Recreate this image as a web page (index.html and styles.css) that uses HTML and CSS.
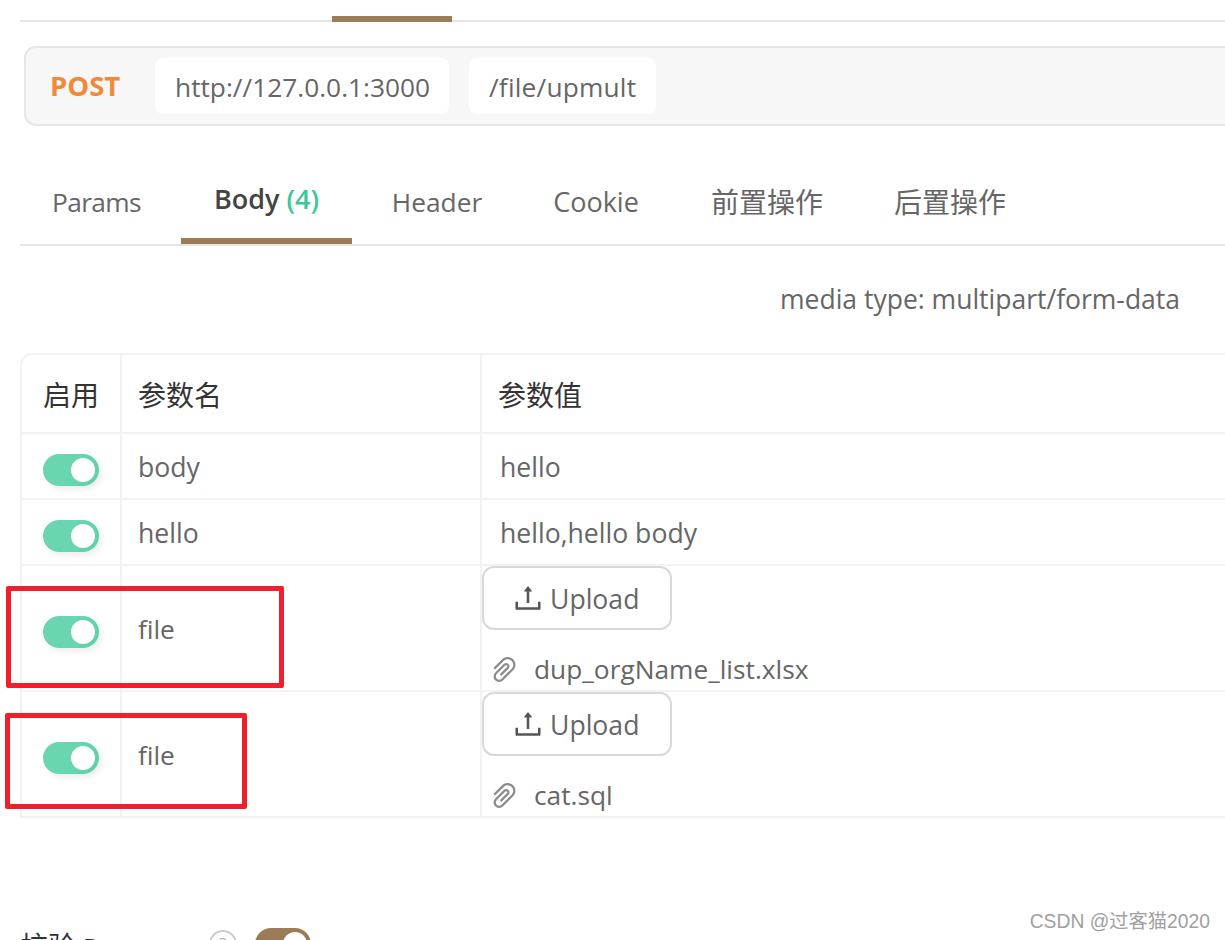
FILE: index.html
```html
<!DOCTYPE html>
<html lang="zh-CN">

<head>
    <meta charset="UTF-8">
    <meta name="viewport" content="width=device-width, initial-scale=1.0">
    <title>Body</title>
    <link rel="stylesheet" href="styles.css">
</head>

<body>
    <div class="page">
        <div class="topTabs"><span class="topTabs-active"></span></div>

        <div class="urlBar">
            <span class="urlBar-method">POST</span>
            <span class="urlBar-field urlBar-host">http://127.0.0.1:3000</span>
            <span class="urlBar-field urlBar-path">/file/upmult</span>
        </div>

        <div class="tabs">
            <div class="tab tab-params">Params</div>
            <div class="tab tab-body"><b>Body</b> <b class="tab-count">(4)</b></div>
            <div class="tab tab-header">Header</div>
            <div class="tab tab-cookie">Cookie</div>
            <div class="tab tab-pre cjk">前置操作</div>
            <div class="tab tab-post cjk">后置操作</div>
        </div>

        <div class="mediaType">media type: multipart/form-data</div>

        <div class="paramsTable">
            <div class="row row-head cjk">
                <div class="cell cell-on">启用</div>
                <div class="cell cell-name">参数名</div>
                <div class="cell cell-value">参数值</div>
            </div>
            <div class="row row-text">
                <div class="cell cell-on"><span class="toggle"></span></div>
                <div class="cell cell-name">body</div>
                <div class="cell cell-value">hello</div>
            </div>
            <div class="row row-text">
                <div class="cell cell-on"><span class="toggle"></span></div>
                <div class="cell cell-name">hello</div>
                <div class="cell cell-value">hello,hello body</div>
            </div>
            <div class="row row-file">
                <div class="cell cell-on"><span class="toggle"></span></div>
                <div class="cell cell-name">file</div>
                <div class="cell cell-upload">
                    <button class="uploadButton">
                        <svg class="uploadIcon" width="30" height="30" viewBox="64 64 896 896" fill="#555">
                            <path d="M400 317.700h73.900V656c0 4.400 3.600 8 8 8h60c4.400 0 8-3.600 8-8V317.700H624c6.700 0 10.400-7.700 6.300-12.900L518.300 163a8 8 0 0 0-12.600 0l-112 141.700c-4.100 5.300-.4 13 6.300 13zM878 626h-60c-4.400 0-8 3.600-8 8v154H214V634c0-4.400-3.600-8-8-8h-60c-4.400 0-8 3.600-8 8v198c0 17.700 14.300 32 32 32h684c17.700 0 32-14.300 32-32V634c0-4.400-3.600-8-8-8z" />
                        </svg>
                        Upload
                    </button>
                    <div class="fileName">
                        <svg class="clipIcon" width="29" height="29" viewBox="64 64 896 896" fill="#8c8c8c">
                            <path d="M779.300 196.600c-94.200-94.200-247.600-94.200-341.700 0l-261 260.800c-1.700 1.700-2.600 4-2.600 6.400s.9 4.700 2.600 6.400l36.900 36.900a9 9 0 0 0 12.700 0l261-260.800c32.400-32.400 75.500-50.200 121.300-50.200s88.900 17.800 121.200 50.200c32.400 32.400 50.200 75.500 50.200 121.200 0 45.800-17.800 88.800-50.200 121.200l-266 265.900-43.100 43.100c-40.300 40.300-105.800 40.300-146.100 0-19.500-19.500-30.200-45.400-30.200-73s10.700-53.500 30.200-73l263.900-263.800c6.700-6.600 15.500-10.300 24.900-10.300h.1c9.400 0 18.100 3.700 24.700 10.300 6.700 6.700 10.300 15.500 10.300 24.900 0 9.300-3.700 18.100-10.300 24.700L372.400 653c-1.700 1.700-2.600 4-2.600 6.400s.9 4.700 2.600 6.400l36.900 36.900a9 9 0 0 0 12.700 0l215.600-215.600c19.900-19.900 30.800-46.300 30.800-74.400s-11-54.600-30.800-74.400c-41.100-41.100-107.900-41-149 0L463 364 224.800 602.100A172.220 172.220 0 0 0 174 724.800c0 46.300 18.100 89.800 50.800 122.500 33.900 33.800 78.300 50.700 122.700 50.700 44.400 0 88.800-16.900 122.600-50.700l309.200-309C824.800 492.700 850 432 850 367.500c.1-64.600-25.100-125.300-70.700-170.900z" />
                        </svg>
                        dup_orgName_list.xlsx
                    </div>
                </div>
            </div>
            <div class="row row-file">
                <div class="cell cell-on"><span class="toggle"></span></div>
                <div class="cell cell-name">file</div>
                <div class="cell cell-upload">
                    <button class="uploadButton">
                        <svg class="uploadIcon" width="30" height="30" viewBox="64 64 896 896" fill="#555">
                            <path d="M400 317.700h73.900V656c0 4.400 3.600 8 8 8h60c4.400 0 8-3.600 8-8V317.700H624c6.700 0 10.400-7.700 6.300-12.900L518.300 163a8 8 0 0 0-12.600 0l-112 141.700c-4.100 5.300-.4 13 6.300 13zM878 626h-60c-4.400 0-8 3.600-8 8v154H214V634c0-4.400-3.600-8-8-8h-60c-4.400 0-8 3.600-8 8v198c0 17.700 14.300 32 32 32h684c17.700 0 32-14.300 32-32V634c0-4.400-3.600-8-8-8z" />
                        </svg>
                        Upload
                    </button>
                    <div class="fileName">
                        <svg class="clipIcon" width="29" height="29" viewBox="64 64 896 896" fill="#8c8c8c">
                            <path d="M779.300 196.600c-94.200-94.200-247.600-94.200-341.700 0l-261 260.800c-1.700 1.700-2.600 4-2.600 6.400s.9 4.700 2.600 6.400l36.900 36.900a9 9 0 0 0 12.700 0l261-260.800c32.400-32.400 75.500-50.200 121.300-50.200s88.900 17.800 121.200 50.200c32.400 32.400 50.200 75.500 50.200 121.200 0 45.800-17.800 88.800-50.200 121.200l-266 265.900-43.100 43.100c-40.300 40.300-105.800 40.300-146.100 0-19.500-19.500-30.200-45.400-30.200-73s10.700-53.500 30.200-73l263.900-263.800c6.700-6.600 15.500-10.300 24.900-10.300h.1c9.400 0 18.100 3.700 24.700 10.300 6.700 6.700 10.300 15.500 10.300 24.900 0 9.300-3.700 18.100-10.300 24.700L372.400 653c-1.700 1.700-2.600 4-2.600 6.400s.9 4.700 2.600 6.400l36.900 36.900a9 9 0 0 0 12.700 0l215.600-215.600c19.900-19.900 30.800-46.300 30.800-74.400s-11-54.600-30.800-74.400c-41.100-41.100-107.900-41-149 0L463 364 224.800 602.100A172.220 172.220 0 0 0 174 724.800c0 46.300 18.100 89.800 50.800 122.500 33.900 33.800 78.300 50.700 122.700 50.700 44.400 0 88.800-16.900 122.600-50.700l309.200-309C824.800 492.700 850 432 850 367.500c.1-64.600-25.100-125.300-70.700-170.900z" />
                        </svg>
                        cat.sql
                    </div>
                </div>
            </div>
        </div>

        <div class="validate">
            <span class="validate-label"><span class="cjk">校验</span> Response</span>
            <span class="helpIcon">?</span>
            <span class="toggle toggle-brown"></span>
        </div>

        <div class="mark mark-one"></div>
        <div class="mark mark-two"></div>
        <div class="watermark">CSDN @过客猫2020</div>
    </div>
</body>

</html>
```

FILE: styles.css
```css
:root {
    --brown: #9c7c56;
    --line: #e6e6e6;
    --tableLine: #f2f2f2;
    --textColor: #666;
    --green: #3cc79b;
}

html,
body {
    margin: 0;
    height: 100%;
    background: #fff;
}

.page {
    position: relative;
    width: 1225px;
    height: 940px;
    overflow: hidden;
    font-family: "Open Sans", "Noto Sans CJK SC", sans-serif;
    font-size: 26.3px;
    color: var(--textColor);
}

.cjk {
    font-size: 28px;
}

.topTabs {
    height: 22px;
    margin-left: 20px;
    border-bottom: 2px solid var(--line);
    box-sizing: border-box;
    display: flex;
    padding-left: 312px;
    align-items: flex-end;
}

.topTabs-active {
    width: 120px;
    height: 6px;
    margin-bottom: -2px;
    background: var(--brown);
}

.urlBar {
    margin: 24px 0 0 24px;
    width: 1240px;
    height: 80px;
    box-sizing: border-box;
    background: #f7f7f7;
    border: 2px solid var(--line);
    border-radius: 12px;
    display: flex;
    align-items: center;
    padding-left: 25px;
}

.urlBar-method {
    width: 104px;
    font-size: 27.5px;
    font-weight: 700;
    color: #f2883a;
    line-height: 60px;
    margin-left: -1px;
    margin-right: 1px;
}

.urlBar-field {
    height: 56px;
    line-height: 58px;
    background: #fff;
    border-radius: 8px;
    padding: 0 20px;
    box-sizing: border-box;
    white-space: nowrap;
}

.urlBar-host {
    width: 294px;
    margin-right: 20px;
}

.urlBar-path {
    width: 187px;
    letter-spacing: 0.2px;
}

.tabs {
    margin: 44px 0 0 20px;
    height: 76px;
    box-sizing: border-box;
    border-bottom: 2px solid var(--line);
    display: flex;
}

.tab {
    box-sizing: border-box;
    height: 74px;
    line-height: 64px;
    text-align: center;
    white-space: nowrap;
}

.tab-params {
    width: 161px;
    letter-spacing: -0.6px;
    padding-right: 8px;
}

.tab-body {
    width: 171px;
    font-size: 27px;
    line-height: 58px;
    color: #444;
    border-bottom: 6px solid var(--brown);
}

.tab-body b {
    font-weight: 600;
}

.tab-body .tab-count {
    color: var(--green);
}

.tab-header {
    width: 170px;
}

.tab-cookie {
    width: 148px;
    font-size: 27px;
}

.tab-pre {
    width: 194px;
}

.tab-post {
    width: 172px;
}

.mediaType {
    margin: 31px 45px 0 0;
    height: 44px;
    line-height: 44px;
    font-size: 26.5px;
    text-align: right;
    white-space: nowrap;
}

.paramsTable {
    margin: 32px 0 0 20px;
    width: 1240px;
    border: 2px solid var(--tableLine);
    border-right: 0;
    border-bottom: 0;
    border-top-left-radius: 12px;
    box-sizing: border-box;
}

.row {
    display: flex;
    border-bottom: 2px solid var(--tableLine);
    box-sizing: border-box;
}

.row-head {
    height: 79px;
    color: #333;
}

.row-text {
    height: 66px;
    font-size: 26.6px;
}

.row-text .cell {
    padding-top: 2px;
}

.row-text .cell-on {
    padding-top: 8px;
}

.row-file {
    height: 126px;
}

.cell {
    box-sizing: border-box;
    border-right: 2px solid var(--tableLine);
    display: flex;
    align-items: center;
    white-space: nowrap;
}

.cell-on {
    width: 100px;
    padding-left: 21px;
}

.cell-name {
    width: 360px;
    padding-left: 16px;
}

.cell-value {
    flex: 1;
    padding-left: 18px;
    border-right: 0;
}

.row-head .cell-value {
    padding-left: 16px;
}

.row-file .cell-name,
.row-file .cell-on {
    align-items: flex-start;
}

.row-file .cell-on {
    padding-top: 50px;
}

.row-file .cell-name {
    height: 124px;
    padding-top: 44px;
    line-height: 38px;
}

.cell-upload {
    flex: 1;
    border-right: 0;
    display: block;
}

.uploadButton {
    display: flex;
    align-items: center;
    gap: 7px;
    width: 190px;
    height: 64px;
    margin-top: 0;
    padding: 2px 0 0 29px;
    box-sizing: border-box;
    background: #fff;
    border: 2px solid #d9d9d9;
    border-radius: 12px;
    font: inherit;
    font-size: 26.6px;
    color: inherit;
}

.uploadIcon {
    flex: none;
    margin-top: -2px;
}

.clipIcon {
    flex: none;
}

.fileName {
    display: flex;
    align-items: center;
    gap: 15px;
    margin: 20px 0 0 8px;
    height: 38px;
    line-height: 38px;
}

.toggle {
    display: inline-block;
    position: relative;
    width: 56px;
    height: 32px;
    border-radius: 16px;
    background: linear-gradient(110deg, #6ad6af 50%, #5ccfa6);
    box-shadow: 3px 3px 6px rgba(0, 0, 0, 0.08);
}

.toggle::after {
    content: "";
    position: absolute;
    top: 4px;
    right: 4px;
    width: 24px;
    height: 24px;
    border-radius: 50%;
    background: #fff;
}

.validate {
    margin: 110px 0 0 20px;
    display: flex;
    align-items: flex-start;
    height: 32px;
    color: #333;
}

.validate-label {
    width: 189px;
    margin-top: -1px;
    white-space: nowrap;
    line-height: 38px;
}

.helpIcon {
    width: 24px;
    height: 24px;
    margin: 2px 18px 0 0;
    border: 2px solid #ccc;
    border-radius: 50%;
    color: #bbb;
    font-size: 18px;
    line-height: 24px;
    text-align: center;
}

.toggle-brown {
    background: var(--brown);
    box-shadow: none;
}

.mark {
    position: absolute;
    box-sizing: border-box;
    border: 5px solid #f01f2c;
    border-radius: 2px;
}

.mark-one {
    left: 6px;
    top: 586px;
    width: 278px;
    height: 102px;
}

.mark-two {
    left: 5px;
    top: 713px;
    width: 242px;
    height: 96px;
}

.watermark {
    position: absolute;
    right: 15px;
    bottom: 6px;
    font-family: "Liberation Sans", "Noto Sans CJK SC", sans-serif;
    font-size: 19.3px;
    color: #a0a0a0;
    white-space: nowrap;
}
```
